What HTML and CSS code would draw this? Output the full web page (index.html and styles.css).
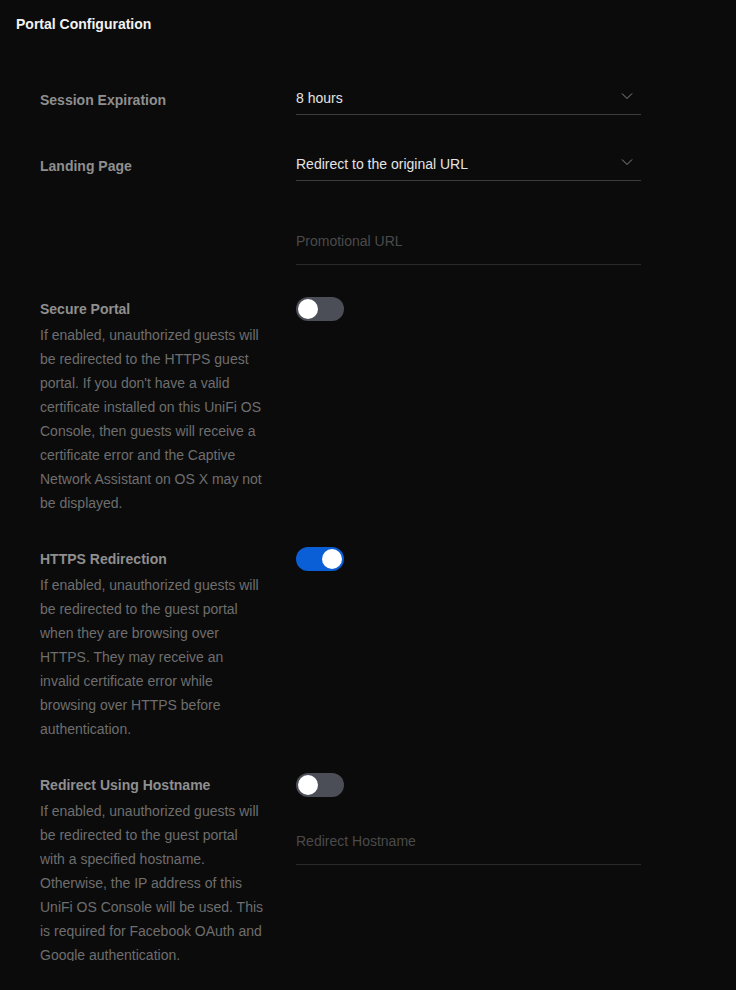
FILE: index.html
```html
<!DOCTYPE html>
<html lang="en">
<head>
<meta charset="utf-8">
<title>Portal Configuration</title>
<link rel="stylesheet" href="styles.css">
</head>
<body>
<div class="page">
  <h1 class="title">Portal Configuration</h1>
  <div class="form">
    <div class="row row-select">
      <div class="label">Session Expiration</div>
      <div class="control">
        <div class="select"><span>8 hours</span>
          <svg class="chev" width="12" height="12" viewBox="0 0 12 12"><path d="M1 3.5 L6 8.5 L11 3.5" fill="none" stroke="#8a8a8a" stroke-width="1"/></svg>
        </div>
      </div>
    </div>
    <div class="row row-select">
      <div class="label">Landing Page</div>
      <div class="control">
        <div class="select"><span>Redirect to the original URL</span>
          <svg class="chev" width="12" height="12" viewBox="0 0 12 12"><path d="M1 3.5 L6 8.5 L11 3.5" fill="none" stroke="#8a8a8a" stroke-width="1"/></svg>
        </div>
        <div class="input input-promo">Promotional URL</div>
      </div>
    </div>
    <div class="row">
      <div class="label-block">
        <div class="label-t">Secure Portal</div>
        <p class="desc">If enabled, unauthorized guests will be redirected to the HTTPS guest portal. If you don't have a valid certificate installed on this UniFi OS Console, then guests will receive a certificate error and the Captive Network Assistant on OS X may not be displayed.</p>
      </div>
      <div class="control">
        <div class="toggle"><span class="knob"></span></div>
      </div>
    </div>
    <div class="row">
      <div class="label-block">
        <div class="label-t">HTTPS Redirection</div>
        <p class="desc">If enabled, unauthorized guests will be redirected to the guest portal when they are browsing over HTTPS. They may receive an invalid certificate error while browsing over HTTPS before authentication.</p>
      </div>
      <div class="control">
        <div class="toggle on"><span class="knob"></span></div>
      </div>
    </div>
    <div class="row">
      <div class="label-block">
        <div class="label-t">Redirect Using Hostname</div>
        <p class="desc">If enabled, unauthorized guests will be redirected to the guest portal with a specified hostname. Otherwise, the IP address of this UniFi OS Console will be used. This is required for Facebook OAuth and Google authentication.</p>
      </div>
      <div class="control">
        <div class="toggle"><span class="knob"></span></div>
        <div class="input input-host">Redirect Hostname</div>
      </div>
    </div>
  </div>
</div>
</body>
</html>
```
FILE: styles.css
```css
html, body {
  margin: 0;
  padding: 0;
  background: #0b0b0b;
}
body {
  font-family: "Liberation Sans", Arial, sans-serif;
  font-size: 14px;
}
.page {
  height: 961px;
  overflow: hidden;
}
.title {
  margin: 0;
  padding: 16px 16px 0 16px;
  font-size: 14px;
  line-height: 16px;
  font-weight: bold;
  color: #f2f2f2;
}
.form {
  padding: 50px 0 0 40px;
}
.row {
  display: grid;
  grid-template-columns: 226px 345px;
  column-gap: 30px;
  margin-bottom: 32px;
}
.row-select {
  margin-bottom: 33px;
}
.row:nth-child(2) {
  margin-bottom: 32px;
}
.label {
  padding-top: 6px;
  line-height: 24px;
  font-weight: bold;
  color: #8f8f8f;
}
.label-t {
  line-height: 24px;
  font-weight: bold;
  color: #8f8f8f;
}
.desc {
  margin: 2px 0 0 0;
  line-height: 24px;
  color: #6e6e6e;
}
.control {
  display: flex;
  flex-direction: column;
}
.select {
  height: 32px;
  display: flex;
  align-items: center;
  justify-content: space-between;
  padding-right: 8px;
  border-bottom: 1px solid #3d3d3d;
  color: #e4e4e4;
  line-height: 24px;
}
.chev {
  display: block;
  margin-top: -4px;
}
.input {
  padding: 12px 0 11px 0;
  line-height: 24px;
  color: #4a4a4a;
  border-bottom: 1px solid #2a2a2a;
}
.input-promo {
  margin-top: 36px;
}
.input-host {
  margin-top: 20px;
}
.toggle {
  width: 48px;
  height: 24px;
  border-radius: 12px;
  background: #4b4e56;
  position: relative;
}
.toggle .knob {
  position: absolute;
  top: 2px;
  left: 2px;
  width: 20px;
  height: 20px;
  border-radius: 50%;
  background: #ffffff;
}
.toggle.on {
  background: #0a5fd6;
}
.toggle.on .knob {
  left: 26px;
}
```
